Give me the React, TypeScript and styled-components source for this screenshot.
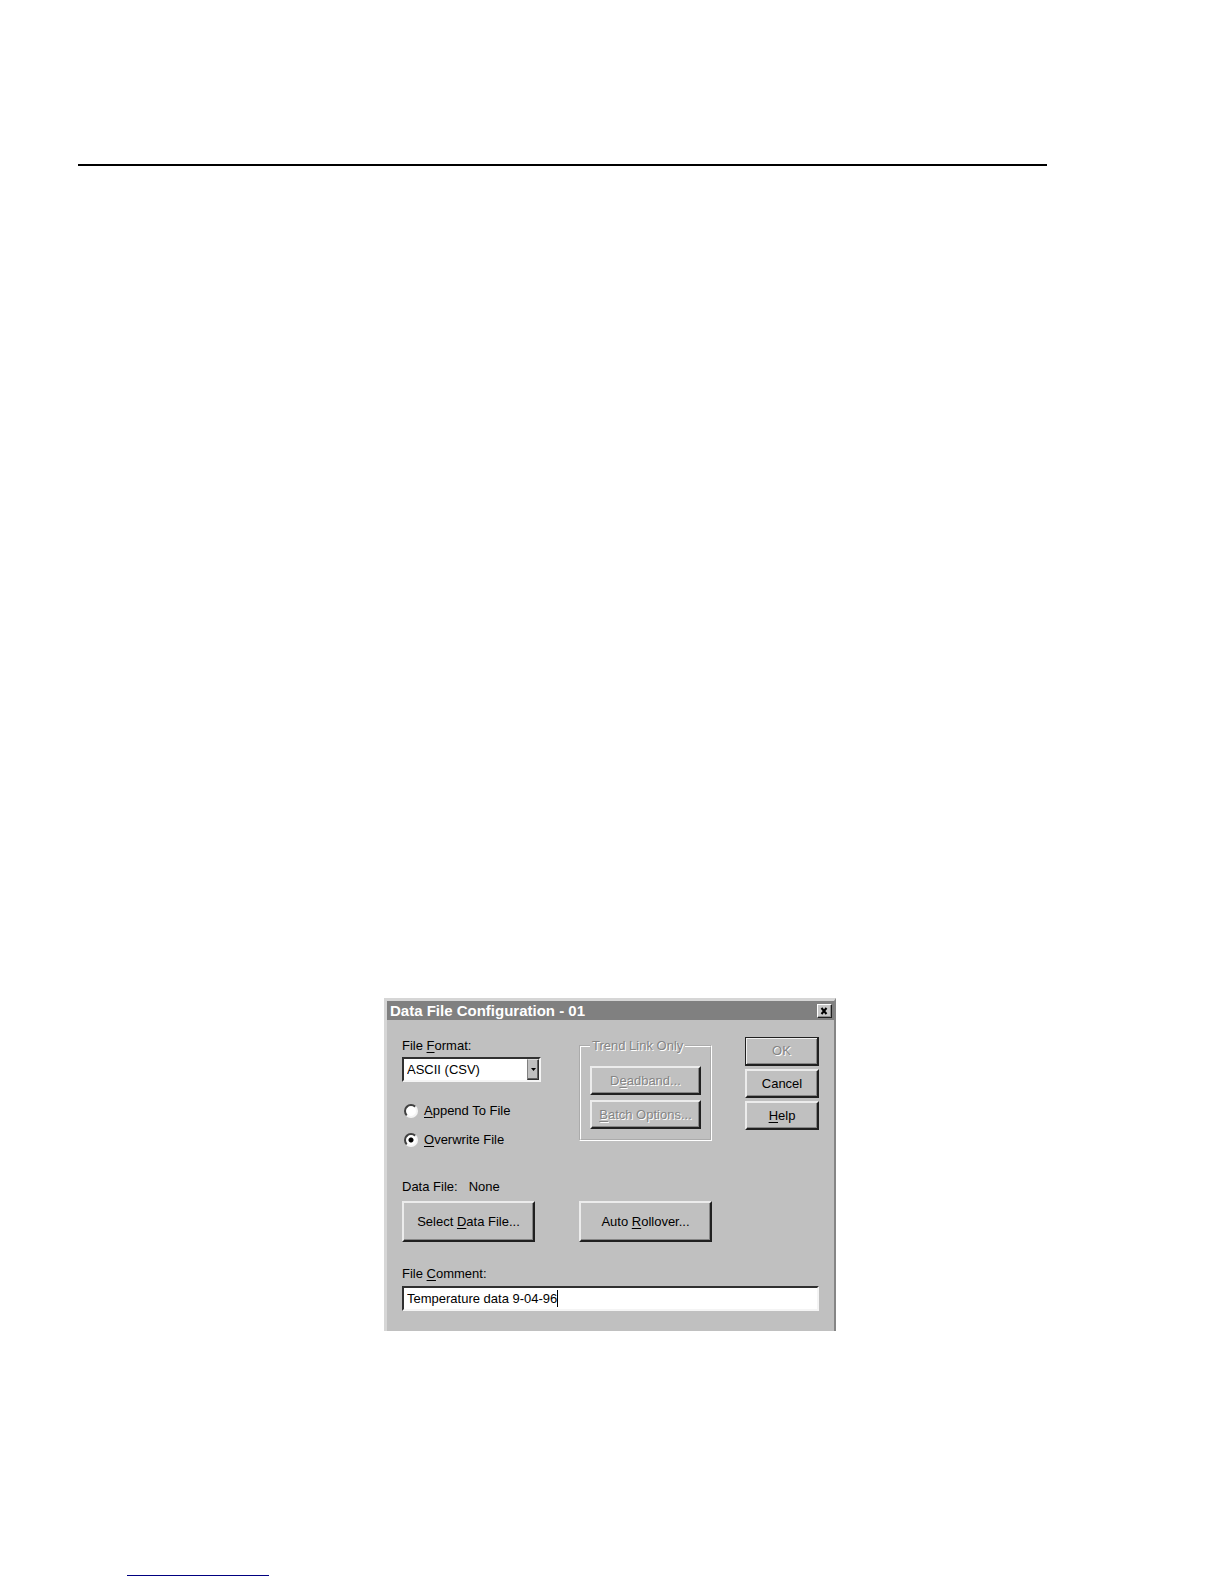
import React, { FunctionComponent, ReactNode, useState } from "react";
import styled, { createGlobalStyle, css } from "styled-components";

const GlobalStyle = createGlobalStyle`
  * {
    box-sizing: border-box;
  }

  body {
    font: 13px/16px "Liberation Sans", Arial, sans-serif;
    background: #fff;
    color: #000;
    margin: 0;
  }

  u {
    text-decoration-skip-ink: none;
    text-underline-offset: 2px;
  }
`;

const disabledText = css`
  color: #858585;
  text-shadow: 1px 1px 0 #fff;
`;

const sunken = css`
  border: 2px solid;
  border-color: #303030 #f4f4f4 #f4f4f4 #303030;
  background: #fff;
`;

const StyledPage = styled.main`
  flex-direction: column;
  min-height: 100vh;
  display: flex;
`;

const StyledHeaderRule = styled.hr`
  border: 0;
  border-top: 2px solid #000;
  align-self: stretch;
  margin: 164px 177px 832px 78px;
`;

const StyledFooter = styled.footer`
  margin-top: auto;
  padding: 0 127px 8px;
`;

const StyledFooterRule = styled.hr`
  border: 0;
  border-top: 1px solid #000080;
  width: 142px;
  margin: 0;
`;

const StyledStage = styled.div`
  justify-content: center;
  padding-right: 4px;
  display: flex;
`;

const StyledDialog = styled.section`
  border: solid;
  border-width: 3px 2px 0 3px;
  border-color: #d6d6d6 #858585 #c0c0c0 #d6d6d6;
  background: #c0c0c0;
  max-width: 100%;
  width: 452px;
`;

const StyledTitleBar = styled.header`
  justify-content: space-between;
  align-items: center;
  background: #808080;
  padding: 0 2px 0 3px;
  display: flex;
  height: 19px;
`;

const StyledTitle = styled.h1`
  font-size: 15px;
  line-height: 19px;
  color: #fff;
  margin: 0;
`;

const StyledClose = styled.button`
  border: 1px solid;
  border-color: #fff #202020 #202020 #fff;
  box-shadow: inset -1px -1px 0 #909090;
  background: #c8c8c8;
  display: flex;
  padding: 2px;
  height: 14px;
  width: 15px;
`;

const StyledBody = styled.form`
  padding: 17px 15px 20px 15px;
  flex-direction: column;
  display: flex;
`;

const StyledColumns = styled.div`
  grid-template-columns: 177px 1fr 74px;
  align-items: start;
  display: grid;
`;

const StyledStack = styled.div<{ $gap: number }>`
  gap: ${(props) => props.$gap}px;
  flex-direction: column;
  align-items: stretch;
  display: flex;
`;

const StyledFormat = styled(StyledStack)`
  padding-top: 1px;
  width: 139px;
`;

const StyledSelectBox = styled.div`
  ${sunken}
  display: flex;
  height: 25px;
`;

const StyledSelect = styled.select`
  appearance: none;
  background: #fff;
  padding: 0 0 0 3px;
  font: inherit;
  color: inherit;
  outline: none;
  border: 0;
  flex: 1;
  min-width: 0;
`;

const StyledArrow = styled.span`
  border: 1px solid;
  border-color: #d8d8d8 #303030 #303030 #808080;
  box-shadow: inset -1px -1px 0 #606060;
  justify-content: center;
  align-items: center;
  background: #c0c0c0;
  pointer-events: none;
  display: flex;
  width: 12px;
`;

const StyledRadios = styled(StyledStack)`
  margin: 18px 0 0 2px;
`;

const StyledRadioLabel = styled.label`
  align-items: center;
  display: flex;
  gap: 6px;
`;

const StyledRadio = styled.input`
  appearance: none;
  border: 2px solid;
  border-color: #404040 #f4f4f4 #f4f4f4 #404040;
  border-radius: 50%;
  background: #fff;
  height: 14px;
  width: 14px;
  margin: 0;

  &:checked {
    background: radial-gradient(circle, #000 2px, #fff 3px);
  }
`;

const StyledGroup = styled.fieldset`
  border: 2px groove #fff;
  padding: 12px 9px 10px;
  width: 133px;
  margin: 1px 0 0;
  min-width: 0;
`;

const StyledLegend = styled.legend`
  ${disabledText}
  padding: 0 2px;
`;

const StyledButton = styled.button<{ $height?: number; $primary?: boolean }>`
  height: ${(props) => props.$height ?? 29}px;
  border: solid;
  border-width: ${(props) => (props.$primary ? "1px 2px 2px 1px" : "2px")};
  border-color: ${(props) =>
    props.$primary ? "#202020" : "#ececec #202020 #202020 #ececec"};
  box-shadow: ${(props) =>
    props.$primary
      ? "inset 1px 1px 0 #f0f0f0, inset -1px -1px 0 #858585"
      : "inset -1px -1px 0 #858585"};
  background: #c0c0c0;
  color: #000;
  font: inherit;
  padding: 0;

  &:disabled {
    ${disabledText}
  }
`;

const StyledActions = styled.div`
  grid-template-columns: 133px 133px;
  column-gap: 44px;
  display: grid;
  margin-top: 6px;
`;

const StyledStatus = styled.p`
  margin: 31px 0 0;
  display: flex;
  gap: 11px;
`;

const StyledComment = styled(StyledStack)`
  margin-top: 24px;
`;

const StyledCommentBox = styled.div`
  ${sunken}
  align-items: center;
  padding-left: 3px;
  display: flex;
  height: 25px;
`;

const StyledInput = styled.input`
  field-sizing: content;
  background: transparent;
  caret-color: transparent;
  max-width: 100%;
  font: inherit;
  color: inherit;
  outline: none;
  padding: 0;
  border: 0;
`;

const StyledCaret = styled.span`
  background: #000;
  height: 17px;
  width: 1px;
`;

interface RadioRowProps {
  checked: boolean;
  onSelect: () => void;
  children: ReactNode;
}

const RadioRow: FunctionComponent<RadioRowProps> = ({
  checked,
  onSelect,
  children,
}) => (
  <StyledRadioLabel>
    <StyledRadio
      type="radio"
      name="write-mode"
      checked={checked}
      onChange={onSelect}
    />
    <span>{children}</span>
  </StyledRadioLabel>
);

const App: FunctionComponent = () => {
  const [mode, setMode] = useState("overwrite");
  const [comment, setComment] = useState("Temperature data 9-04-96");

  return (
    <StyledPage>
      <GlobalStyle />
      <StyledHeaderRule />
      <StyledStage>
        <StyledDialog>
          <StyledTitleBar>
            <StyledTitle>Data File Configuration - 01</StyledTitle>
            <StyledClose type="button" aria-label="Close">
              <svg width="9" height="8" viewBox="0 0 9 8">
                <path d="M1.5 1l5 6M6.5 1l-5 6" stroke="#000" strokeWidth="2" />
              </svg>
            </StyledClose>
          </StyledTitleBar>
          <StyledBody onSubmit={(event) => event.preventDefault()}>
            <StyledColumns>
              <StyledFormat $gap={3}>
                <label htmlFor="format">
                  File <u>F</u>ormat:
                </label>
                <StyledSelectBox>
                  <StyledSelect id="format">
                    <option>ASCII (CSV)</option>
                  </StyledSelect>
                  <StyledArrow>
                    <svg width="5" height="3" viewBox="0 0 5 3">
                      <path d="M0 0h5L2.5 3z" />
                    </svg>
                  </StyledArrow>
                </StyledSelectBox>
                <StyledRadios $gap={13}>
                  <RadioRow
                    checked={mode === "append"}
                    onSelect={() => setMode("append")}
                  >
                    <u>A</u>ppend To File
                  </RadioRow>
                  <RadioRow
                    checked={mode === "overwrite"}
                    onSelect={() => setMode("overwrite")}
                  >
                    <u>O</u>verwrite File
                  </RadioRow>
                </StyledRadios>
              </StyledFormat>
              <StyledGroup>
                <StyledLegend>Trend Link Only</StyledLegend>
                <StyledStack $gap={5}>
                  <StyledButton type="button" disabled>
                    D<u>e</u>adband...
                  </StyledButton>
                  <StyledButton type="button" disabled>
                    <u>B</u>atch Options...
                  </StyledButton>
                </StyledStack>
              </StyledGroup>
              <StyledStack $gap={3}>
                <StyledButton type="submit" $primary disabled>
                  OK
                </StyledButton>
                <StyledButton type="button">Cancel</StyledButton>
                <StyledButton type="button">
                  <u>H</u>elp
                </StyledButton>
              </StyledStack>
            </StyledColumns>
            <StyledStatus>
              <span>Data File:</span>
              <span>None</span>
            </StyledStatus>
            <StyledActions>
              <StyledButton type="button" $height={41}>
                Select <u>D</u>ata File...
              </StyledButton>
              <StyledButton type="button" $height={41}>
                Auto <u>R</u>ollover...
              </StyledButton>
            </StyledActions>
            <StyledComment $gap={4}>
              <label htmlFor="comment">
                File <u>C</u>omment:
              </label>
              <StyledCommentBox>
                <StyledInput
                  id="comment"
                  type="text"
                  value={comment}
                  onChange={(event) => setComment(event.target.value)}
                />
                <StyledCaret />
              </StyledCommentBox>
            </StyledComment>
          </StyledBody>
        </StyledDialog>
      </StyledStage>
      <StyledFooter>
        <StyledFooterRule />
      </StyledFooter>
    </StyledPage>
  );
};

export default App;
